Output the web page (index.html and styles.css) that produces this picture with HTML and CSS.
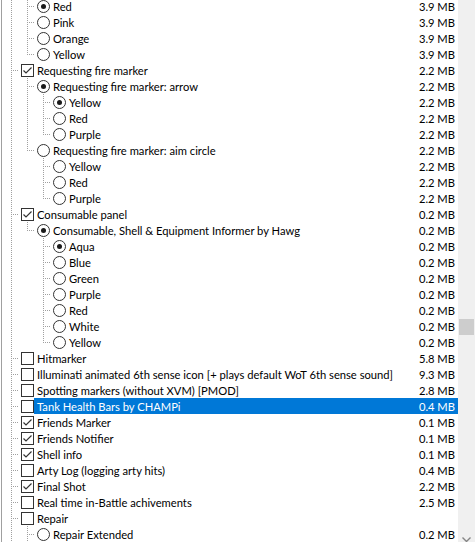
FILE: index.html
```html
<!DOCTYPE html>
<html>
<head>
<meta charset="utf-8">
<link rel="stylesheet" href="styles.css">
</head>
<body>
<div class="window">
  <div class="tree">
    <div class="rows">
      <div class="row"><span class="cell v"></span><span class="cell t"></span><span class="icon radio on"></span><span class="item"><span>Red</span><span>3.9 MB</span></span></div>
      <div class="row"><span class="cell v"></span><span class="cell t"></span><span class="icon radio"></span><span class="item"><span>Pink</span><span>3.9 MB</span></span></div>
      <div class="row"><span class="cell v"></span><span class="cell t"></span><span class="icon radio"></span><span class="item"><span>Orange</span><span>3.9 MB</span></span></div>
      <div class="row"><span class="cell v"></span><span class="cell l"></span><span class="icon radio"></span><span class="item"><span>Yellow</span><span>3.9 MB</span></span></div>
      <div class="row"><span class="cell t"></span><span class="icon check on"><svg viewBox="0 0 11 11"><path d="M1.5 5.5 L4 8 L9.5 2.5"/></svg></span><span class="item"><span>Requesting fire marker</span><span>2.2 MB</span></span></div>
      <div class="row"><span class="cell v"></span><span class="cell t"></span><span class="icon radio on"></span><span class="item"><span>Requesting fire marker: arrow</span><span>2.2 MB</span></span></div>
      <div class="row"><span class="cell v"></span><span class="cell v"></span><span class="cell t"></span><span class="icon radio on"></span><span class="item"><span>Yellow</span><span>2.2 MB</span></span></div>
      <div class="row"><span class="cell v"></span><span class="cell v"></span><span class="cell t"></span><span class="icon radio"></span><span class="item"><span>Red</span><span>2.2 MB</span></span></div>
      <div class="row"><span class="cell v"></span><span class="cell v"></span><span class="cell l"></span><span class="icon radio"></span><span class="item"><span>Purple</span><span>2.2 MB</span></span></div>
      <div class="row"><span class="cell v"></span><span class="cell l"></span><span class="icon radio"></span><span class="item"><span>Requesting fire marker: aim circle</span><span>2.2 MB</span></span></div>
      <div class="row"><span class="cell v"></span><span class="cell"></span><span class="cell t"></span><span class="icon radio"></span><span class="item"><span>Yellow</span><span>2.2 MB</span></span></div>
      <div class="row"><span class="cell v"></span><span class="cell"></span><span class="cell t"></span><span class="icon radio"></span><span class="item"><span>Red</span><span>2.2 MB</span></span></div>
      <div class="row"><span class="cell v"></span><span class="cell"></span><span class="cell l"></span><span class="icon radio"></span><span class="item"><span>Purple</span><span>2.2 MB</span></span></div>
      <div class="row"><span class="cell t"></span><span class="icon check on"><svg viewBox="0 0 11 11"><path d="M1.5 5.5 L4 8 L9.5 2.5"/></svg></span><span class="item"><span>Consumable panel</span><span>0.2 MB</span></span></div>
      <div class="row"><span class="cell v"></span><span class="cell l"></span><span class="icon radio on"></span><span class="item"><span>Consumable, Shell &amp; Equipment Informer by Hawg</span><span>0.2 MB</span></span></div>
      <div class="row"><span class="cell v"></span><span class="cell"></span><span class="cell t"></span><span class="icon radio on"></span><span class="item"><span>Aqua</span><span>0.2 MB</span></span></div>
      <div class="row"><span class="cell v"></span><span class="cell"></span><span class="cell t"></span><span class="icon radio"></span><span class="item"><span>Blue</span><span>0.2 MB</span></span></div>
      <div class="row"><span class="cell v"></span><span class="cell"></span><span class="cell t"></span><span class="icon radio"></span><span class="item"><span>Green</span><span>0.2 MB</span></span></div>
      <div class="row"><span class="cell v"></span><span class="cell"></span><span class="cell t"></span><span class="icon radio"></span><span class="item"><span>Purple</span><span>0.2 MB</span></span></div>
      <div class="row"><span class="cell v"></span><span class="cell"></span><span class="cell t"></span><span class="icon radio"></span><span class="item"><span>Red</span><span>0.2 MB</span></span></div>
      <div class="row"><span class="cell v"></span><span class="cell"></span><span class="cell t"></span><span class="icon radio"></span><span class="item"><span>White</span><span>0.2 MB</span></span></div>
      <div class="row"><span class="cell v"></span><span class="cell"></span><span class="cell l"></span><span class="icon radio"></span><span class="item"><span>Yellow</span><span>0.2 MB</span></span></div>
      <div class="row"><span class="cell t"></span><span class="icon check"></span><span class="item"><span>Hitmarker</span><span>5.8 MB</span></span></div>
      <div class="row"><span class="cell t"></span><span class="icon check"></span><span class="item"><span>Illuminati animated 6th sense icon [+ plays default WoT 6th sense sound]</span><span>9.3 MB</span></span></div>
      <div class="row"><span class="cell t"></span><span class="icon check"></span><span class="item"><span>Spotting markers (without XVM) [PMOD]</span><span>2.8 MB</span></span></div>
      <div class="row"><span class="cell t"></span><span class="icon check"></span><span class="item sel"><span>Tank Health Bars by CHAMPi</span><span>0.4 MB</span></span></div>
      <div class="row"><span class="cell t"></span><span class="icon check on"><svg viewBox="0 0 11 11"><path d="M1.5 5.5 L4 8 L9.5 2.5"/></svg></span><span class="item"><span>Friends Marker</span><span>0.1 MB</span></span></div>
      <div class="row"><span class="cell t"></span><span class="icon check on"><svg viewBox="0 0 11 11"><path d="M1.5 5.5 L4 8 L9.5 2.5"/></svg></span><span class="item"><span>Friends Notifier</span><span>0.1 MB</span></span></div>
      <div class="row"><span class="cell t"></span><span class="icon check on"><svg viewBox="0 0 11 11"><path d="M1.5 5.5 L4 8 L9.5 2.5"/></svg></span><span class="item"><span>Shell info</span><span>0.1 MB</span></span></div>
      <div class="row"><span class="cell t"></span><span class="icon check"></span><span class="item"><span>Arty Log (logging arty hits)</span><span>0.4 MB</span></span></div>
      <div class="row"><span class="cell t"></span><span class="icon check on"><svg viewBox="0 0 11 11"><path d="M1.5 5.5 L4 8 L9.5 2.5"/></svg></span><span class="item"><span>Final Shot</span><span>2.2 MB</span></span></div>
      <div class="row"><span class="cell t"></span><span class="icon check"></span><span class="item"><span>Real time in-Battle achivements</span><span>2.5 MB</span></span></div>
      <div class="row"><span class="cell t"></span><span class="icon check"></span><span class="item"><span>Repair</span><span></span></span></div>
      <div class="row"><span class="cell v"></span><span class="cell t"></span><span class="icon radio"></span><span class="item"><span>Repair Extended</span><span>0.2 MB</span></span></div>
    </div>
  </div>
  <div class="scroll">
    <div class="thumb"></div>
    <div class="arrow"><svg viewBox="0 0 17 6" width="17" height="6"><path d="M4.5 1.5 L8.5 5.5 L12.5 1.5"/></svg></div>
  </div>
</div>
</body>
</html>
```
FILE: styles.css
```css
html, body {
  margin: 0;
  padding: 0;
}
body {
  width: 475px;
  height: 542px;
  overflow: hidden;
  background: #fff;
  font-family: Lato, "Noto Sans", sans-serif;
  font-size: 11.2px;
  color: #000;
}
.window {
  display: flex;
  height: 542px;
}
.tree {
  flex: 1;
  min-width: 0;
  margin-left: 1px;
  border-left: 1px solid #a0a0a0;
  overflow: hidden;
}
.rows {
  margin-top: -2px;
}
.row {
  display: flex;
  align-items: center;
  height: 16px;
  padding-left: 1px;
}
.cell {
  width: 16px;
  height: 16px;
  flex: none;
}
.v {
  background: repeating-linear-gradient(to bottom, #a0a0a0 0 1px, transparent 1px 2px) 8px 0 / 1px 16px no-repeat;
}
.t {
  background:
    repeating-linear-gradient(to bottom, #a0a0a0 0 1px, transparent 1px 2px) 8px 0 / 1px 16px no-repeat,
    repeating-linear-gradient(to right, #a0a0a0 0 1px, transparent 1px 2px) 8px 8px / 8px 1px no-repeat;
}
.l {
  background:
    repeating-linear-gradient(to bottom, #a0a0a0 0 1px, transparent 1px 2px) 8px 0 / 1px 9px no-repeat,
    repeating-linear-gradient(to right, #a0a0a0 0 1px, transparent 1px 2px) 8px 8px / 8px 1px no-repeat;
}
.icon {
  width: 13px;
  height: 13px;
  box-sizing: border-box;
  margin-left: 2px;
  flex: none;
  border: 1px solid #333;
  background: #fff;
  position: relative;
}
.radio {
  border-radius: 50%;
}
.radio.on::after {
  content: "";
  position: absolute;
  left: 3px;
  top: 3px;
  width: 5px;
  height: 5px;
  border-radius: 50%;
  background: #1a1a1a;
}
.check svg {
  display: block;
  width: 11px;
  height: 11px;
}
.check svg path {
  fill: none;
  stroke: #333;
  stroke-width: 1.2;
}
.item {
  flex: 1;
  min-width: 0;
  height: 16px;
  display: flex;
  align-items: center;
  justify-content: space-between;
  padding: 0 3px;
  white-space: nowrap;
}
.sel {
  background: #0078d7;
  color: #fff;
}
.scroll {
  width: 17px;
  flex: none;
  background: #f0f0f0;
  display: flex;
  flex-direction: column;
}
.thumb {
  margin: 319px 1px 0 1px;
  height: 16px;
  background: #cdcdcd;
}
.arrow {
  margin-top: auto;
  height: 6px;
}
.arrow svg {
  display: block;
}
.arrow path {
  fill: none;
  stroke: #858585;
  stroke-width: 1.4;
}
```
